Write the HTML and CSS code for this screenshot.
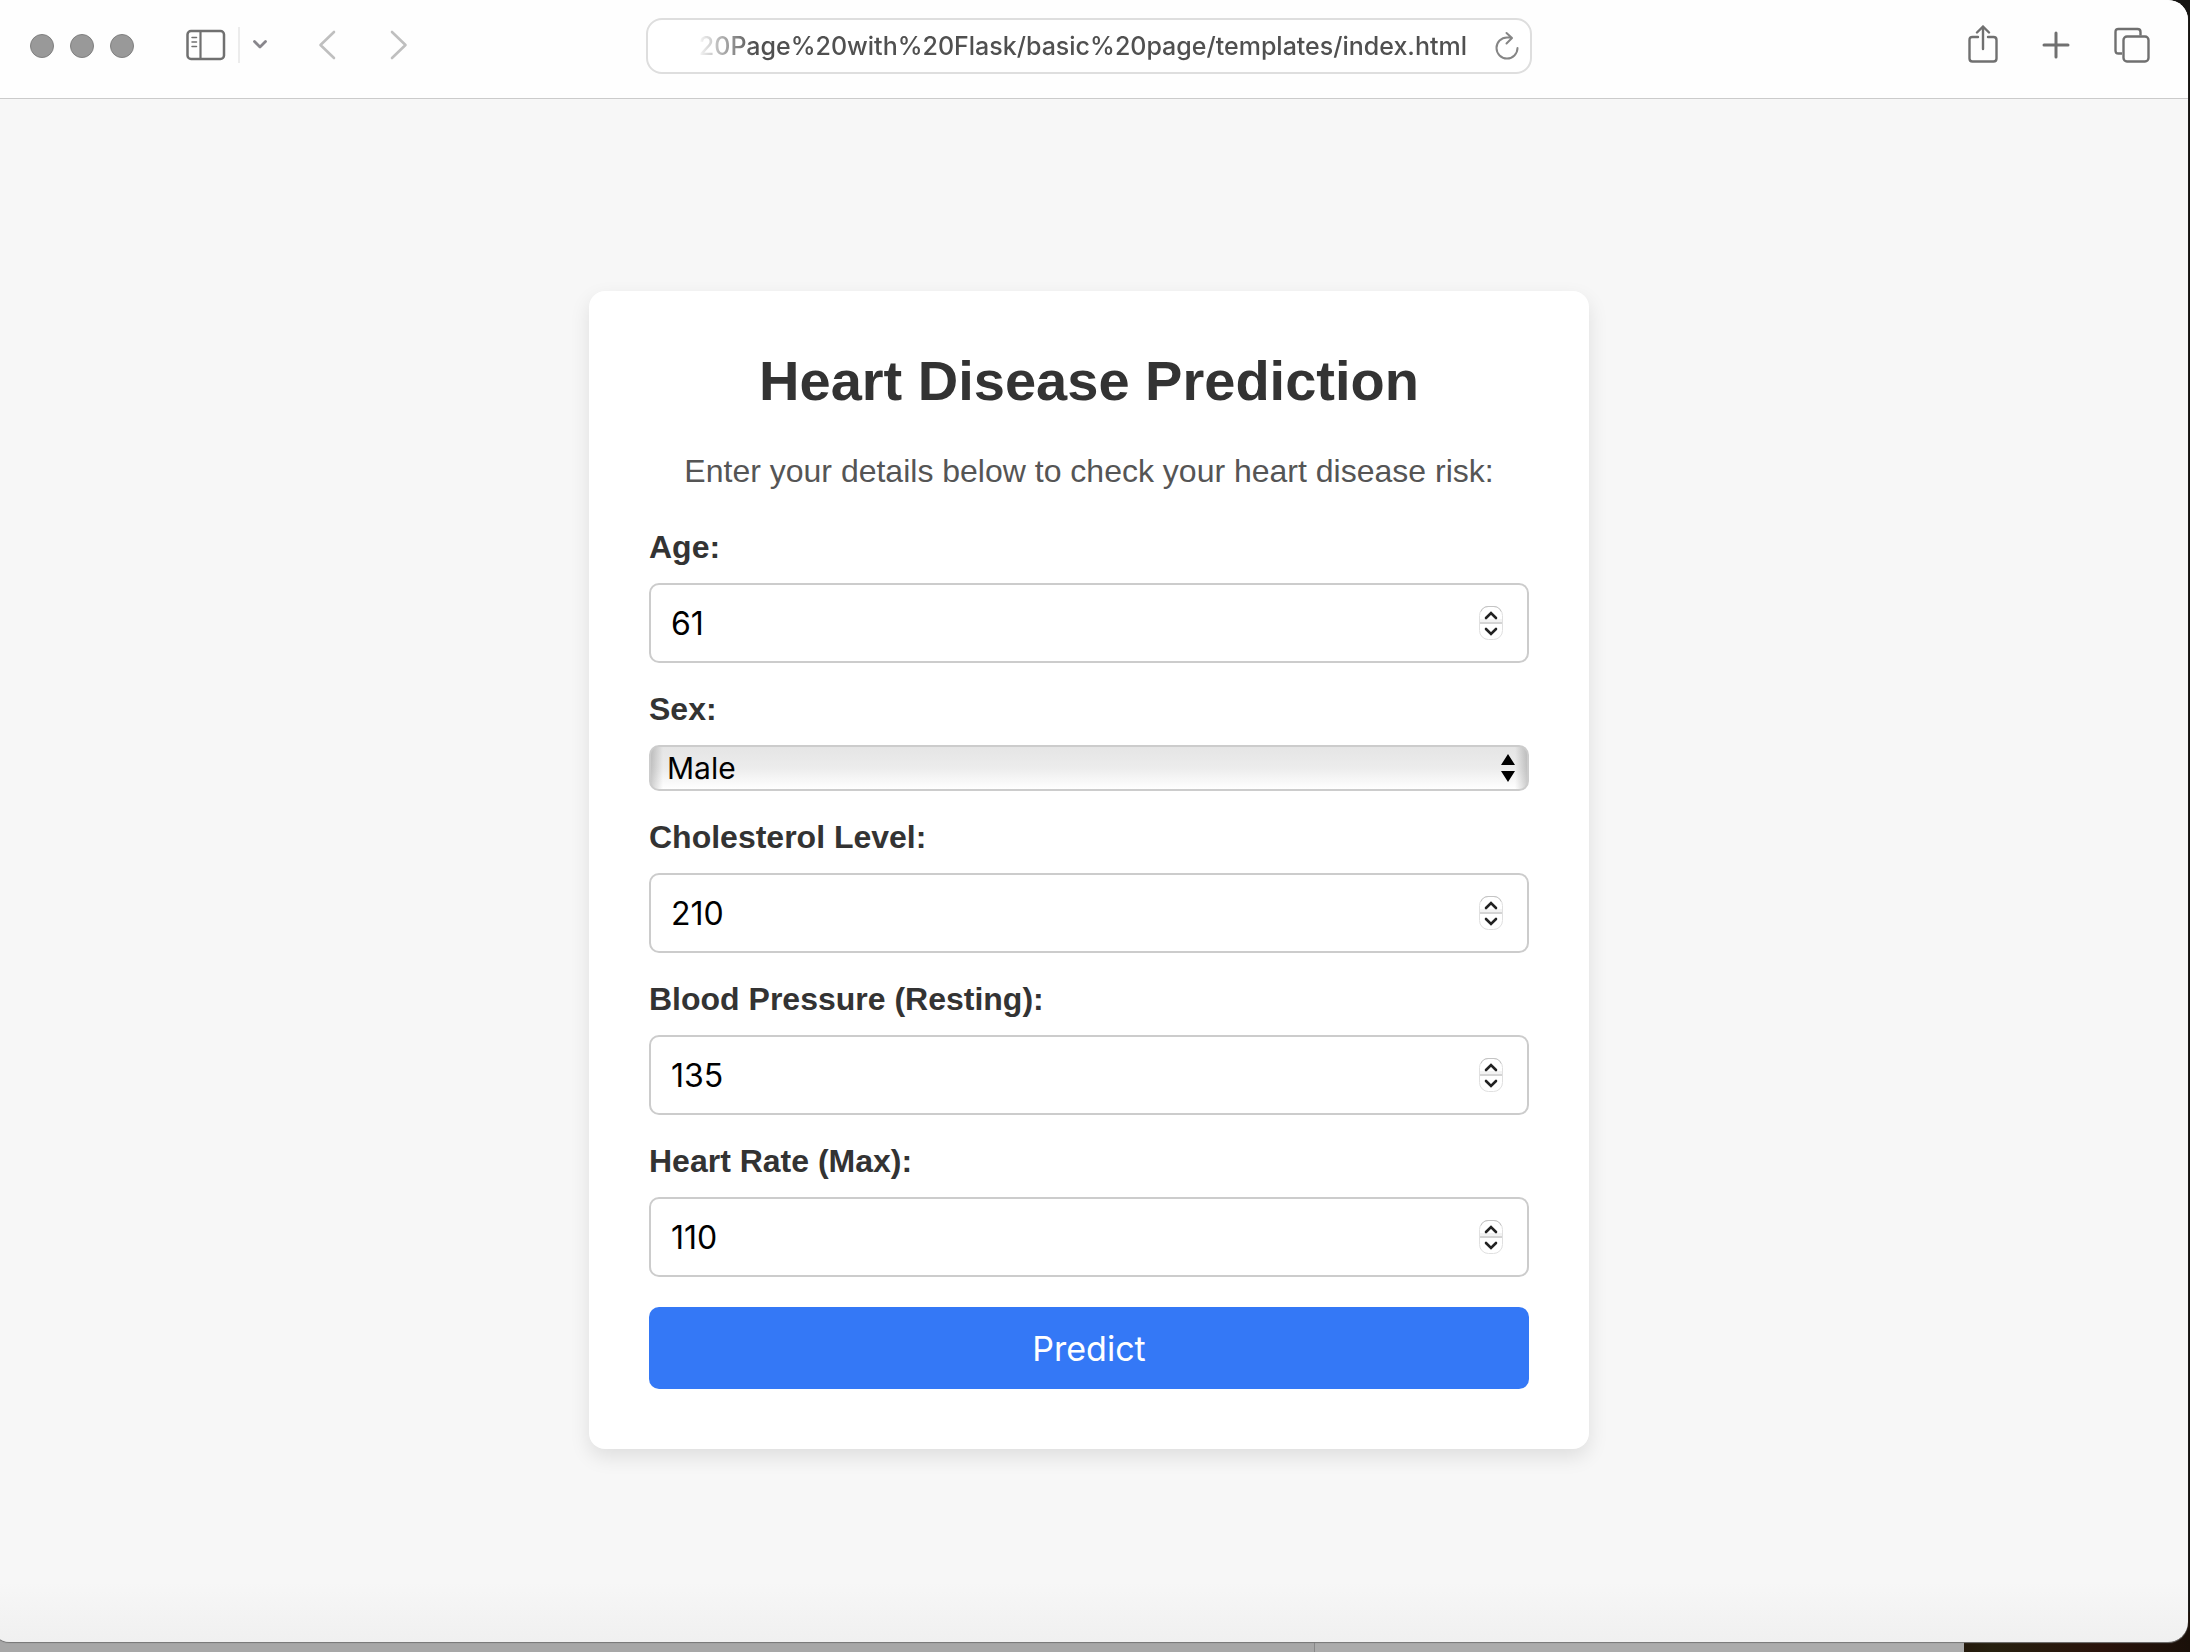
FILE: index.html
```html
<!DOCTYPE html>
<html lang="en">
<head>
<meta charset="utf-8">
<title>Heart Disease Prediction</title>
<link rel="stylesheet" href="styles.css">
</head>
<body>
<svg class="symbols" aria-hidden="true">
  <symbol id="stepper" viewBox="0 0 28 38">
    <rect x="2.5" y="2.5" width="23" height="33" rx="9" fill="#fff" stroke="#e0e0e0"/>
    <path d="M4 7.5Q6 2.500 11 2.500H17Q22 2.500 24 7.500" fill="none" stroke="#c4c4c4"/>
    <path d="M3 15H25V18H3Z" fill="#f3f3f3"/>
    <path d="M3 19H25" stroke="#d4d4d4" stroke-width="2"/>
    <path d="M9 14L14 9L19 14M9 25L14 30L19 25" fill="none" stroke="#222" stroke-width="2.600" stroke-linecap="round"/>
  </symbol>
</svg>
<div class="window">
  <header class="toolbar">
    <div class="tools">
      <div class="lights"><i class="light"></i><i class="light"></i><i class="light"></i></div>
      <button class="tool sidebar" aria-label="Show sidebar">
        <svg width="40" height="32" viewBox="0 0 40 32" fill="none" stroke="#707070">
          <rect x="1.500" y="2" width="36.500" height="28" rx="3.500" stroke-width="2.500"/>
          <path d="M14.500 2V30" stroke-width="2.200"/>
          <path d="M6 8.500H10.500M6 13H10.500M6 17.500H10.500" stroke-width="1.500" stroke-linecap="round"/>
        </svg>
      </button>
      <span class="divider"></span>
      <button class="tool menu" aria-label="Tab groups">
        <svg width="16" height="12" viewBox="0 0 16 12" fill="none" stroke="#88868c" stroke-width="2.800" stroke-linecap="round" stroke-linejoin="round"><path d="M2.500 2.500L8 8L13.500 2.500"/></svg>
      </button>
      <button class="tool back" aria-label="Back">
        <svg width="18" height="30" viewBox="0 0 18 30" fill="none" stroke="#bfbfbf" stroke-width="2.600" stroke-linecap="round" stroke-linejoin="round"><path d="M16 2L2.500 15L16 28"/></svg>
      </button>
      <button class="tool" aria-label="Forward">
        <svg width="18" height="30" viewBox="0 0 18 30" fill="none" stroke="#bfbfbf" stroke-width="2.600" stroke-linecap="round" stroke-linejoin="round"><path d="M2 2L15.500 15L2 28"/></svg>
      </button>
    </div>
    <div class="address">
      <input class="url" type="text" aria-label="Address" value="20Page%20with%20Flask/basic%20page/templates/index.html">
      <button class="tool" aria-label="Reload">
        <svg width="24" height="30" viewBox="0 0 24 30" fill="none" stroke="#858585" stroke-width="2" stroke-linecap="round" stroke-linejoin="round"><path d="M22.500 17A10.500 10.500 0 1 1 12 6.500H16.500M11.500 2L17 7L11.500 12.500"/></svg>
      </button>
    </div>
    <div class="tools actions">
      <button class="tool" aria-label="Share">
        <svg width="30" height="40" viewBox="0 1 30 40" fill="none" stroke="#707070" stroke-width="2.400" stroke-linecap="round" stroke-linejoin="round"><path d="M10 13H4.500Q1.500 13 1.500 16V34.500Q1.500 37.500 4.500 37.500H25.500Q28.500 37.500 28.500 34.500V16Q28.500 13 25.500 13H20M15 25V2.500M9 8.500L15 2.500L21 8.500"/></svg>
      </button>
      <button class="tool" aria-label="New tab">
        <svg width="28" height="28" viewBox="0 0 28 28" fill="none" stroke="#707070" stroke-width="3" stroke-linecap="round"><path d="M14 2V26M2 14H26"/></svg>
      </button>
      <button class="tool" aria-label="Tab overview">
        <svg width="36" height="36" viewBox="0 0 36 36" fill="none" stroke="#707070" stroke-width="2.400"><path d="M8 26.500H4.500Q1.500 26.500 1.500 23.500V5Q1.500 2 4.500 2H23.500Q26.500 2 26.500 5V8.500"/><rect x="9.500" y="9.500" width="25" height="25" rx="3.500"/></svg>
      </button>
    </div>
  </header>
  <main class="page">
    <section class="card">
      <h1 class="title">Heart Disease Prediction</h1>
      <p class="intro">Enter your details below to check your heart disease risk:</p>
      <form class="form">
        <div class="field">
          <label for="age">Age:</label>
          <div class="control"><input class="number" id="age" type="number" value="61"><svg class="stepper"><use href="#stepper"/></svg></div>
        </div>
        <div class="field">
          <label for="sex">Sex:</label>
          <div class="control">
            <select class="select" id="sex"><option>Male</option><option>Female</option></select>
            <svg class="arrows" viewBox="0 0 14 28"><path d="M7 0L14 11H0ZM0 17H14L7 28Z"/></svg>
          </div>
        </div>
        <div class="field">
          <label for="chol">Cholesterol Level:</label>
          <div class="control"><input class="number" id="chol" type="number" value="210"><svg class="stepper"><use href="#stepper"/></svg></div>
        </div>
        <div class="field">
          <label for="bp">Blood Pressure (Resting):</label>
          <div class="control"><input class="number" id="bp" type="number" value="135"><svg class="stepper"><use href="#stepper"/></svg></div>
        </div>
        <div class="field">
          <label for="rate">Heart Rate (Max):</label>
          <div class="control"><input class="number" id="rate" type="number" value="110"><svg class="stepper"><use href="#stepper"/></svg></div>
        </div>
        <button class="submit" type="button">Predict</button>
      </form>
    </section>
  </main>
</div>
</body>
</html>
```
FILE: styles.css
```css
* { box-sizing: border-box; }

body {
  margin: 0;
  min-height: 100vh;
  display: flex;
  flex-direction: column;
  overflow-x: hidden;
  font-family: "Liberation Sans", Arial, sans-serif;
  /* grey window behind, then the dark desktop */
  background:
    linear-gradient(to right, #a7a7a7 0 60%, #888 60% calc(60% + 1px), #ababab calc(60% + 1px) 89.7%, transparent 89.7%) bottom / 100% 40px no-repeat,
    linear-gradient(to right, #241a0c 89.7%, #26200f 91%, #2a130b 96%, #1a1009) bottom / 100% 40px no-repeat,
    #161412;
}

.symbols { display: none; }
svg { display: block; }

.window {
  flex: 1;
  display: flex;
  flex-direction: column;
  margin: 0 2px 10px -10px;
  border-radius: 0 20px 20px 20px;
  overflow: hidden;
  background: linear-gradient(#f7f7f7 calc(100% - 60px), #f0f0f0);
  box-shadow: 0 1px 1px #777;
}

.toolbar {
  display: grid;
  grid-template-columns: 1fr minmax(0, 886px) 1fr;
  align-items: center;
  height: 99px;
  padding: 0 38px 6px;
  background: #fefefe;
  border-bottom: 1px solid #cbcbcb;
}

.tools { display: flex; align-items: center; padding-bottom: 2px; }
.actions { justify-content: flex-end; gap: 44px; }

.tool {
  display: block;
  padding: 0;
  border: 0;
  background: none;
}

.lights { display: flex; gap: 16px; padding: 2px 0 0 2px; }
.light {
  width: 24px;
  height: 24px;
  border: 1px solid #808080;
  border-radius: 50%;
  background: #999;
}
.sidebar { margin-left: 52px; }
.divider {
  width: 2px;
  height: 36px;
  margin: 0 12px;
  background: #ececec;
}
.back { margin: 0 54px 0 50px; }

.address {
  display: flex;
  align-items: center;
  justify-content: space-between;
  height: 56px;
  padding: 0 11px 0 38px;
  border: 2px solid #dedede;
  border-radius: 16px;
  background: #fff;
}
.url {
  flex: 1;
  min-width: 0;
  margin-right: 28px;
  padding: 0;
  border: 0;
  outline: 0;
  background: none;
  color: #505050;
  font: 500 25px/34px Inter, sans-serif;
  text-align: right;
  -webkit-mask-image: linear-gradient(to right, transparent 10px, #000 68px);
  mask-image: linear-gradient(to right, transparent 10px, #000 68px);
}

.page {
  flex: 1;
  display: flex;
  align-items: center;
  justify-content: center;
  padding-bottom: 1px;
}

.card {
  width: 100%;
  max-width: 1000px;
  padding: 60px;
  border-radius: 16px;
  background: #fff;
  box-shadow: 0 8px 20px rgba(0, 0, 0, 0.1);
  color: #333;
}

.title {
  margin: 0 0 44px;
  font-size: 56px;
  line-height: 60px;
  text-align: center;
}
.intro {
  margin: 0 0 44px;
  color: #555;
  font-size: 32px;
  line-height: 32px;
  text-align: center;
}

.form { display: flex; flex-direction: column; gap: 30px; }
.field { display: flex; flex-direction: column; gap: 20px; }
.field label { font-size: 32px; font-weight: bold; line-height: 32px; }

/* input and its glyph share one grid cell */
.control { display: grid; align-items: center; }
.control > * { grid-area: 1 / 1; }

.number,
.select {
  width: 100%;
  border: 2px solid #ccc;
  border-radius: 10px;
  color: #000;
  font: 32px Inter, sans-serif;
  appearance: none;
}
.number {
  height: 80px;
  padding: 0 60px 0 20px;
  background: #fff;
  appearance: textfield;
}
.number::-webkit-inner-spin-button { appearance: none; margin: 0; }

.select {
  height: 46px;
  padding: 0 40px 0 16px;
  font-size: 30px;
  line-height: 40px;
  background:
    linear-gradient(to right, rgba(0, 0, 0, 0.18), transparent 12px),
    linear-gradient(to left, rgba(0, 0, 0, 0.18), transparent 12px),
    linear-gradient(#e5e5e5, #ececec 50%, #fff);
}

.stepper,
.arrows { justify-self: end; pointer-events: none; }
.stepper { width: 28px; height: 38px; margin-right: 24px; }
.arrows { width: 14px; height: 28px; margin-right: 14px; }

.submit {
  height: 82px;
  border: 0;
  border-radius: 10px;
  background: #3478f6;
  color: #fff;
  font: 34px Inter, sans-serif;
}
```
